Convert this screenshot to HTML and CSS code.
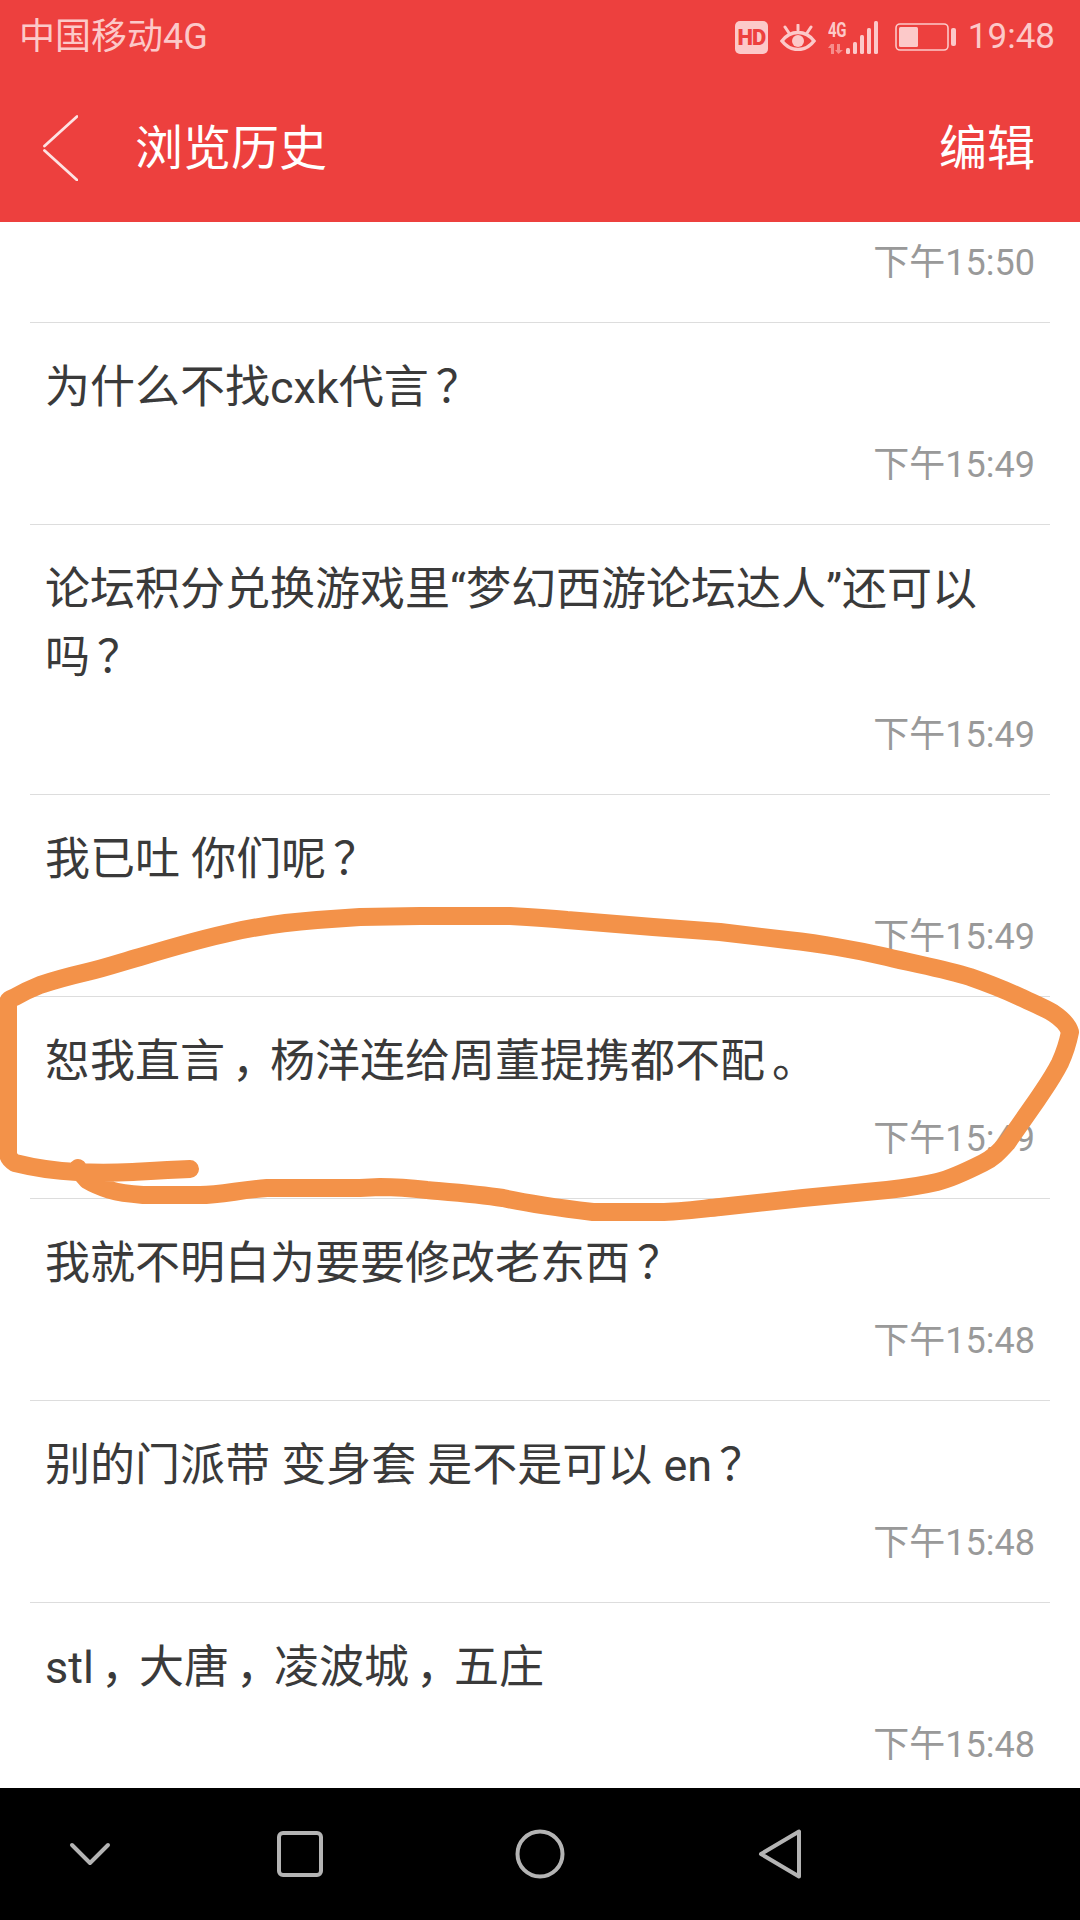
FILE: index.html
```html
<!DOCTYPE html>
<html lang="zh-CN">
<head>
<meta charset="utf-8">
<title>浏览历史</title>
<link rel="stylesheet" href="styles.css">
</head>
<body>
<div class="screen">
  <header class="top">
    <div class="status">
      <span class="carrier">中国移动4G</span>
      <div class="status-icons">
        <span class="hd">HD</span>
        <svg class="eye" width="36" height="27" viewBox="0 0 36 27" fill="none" stroke="#fcc9c9">
          <path d="M2 17C6.500 11 11.500 8.500 18 8.500S29.500 11 34 17C29.500 23 24.500 25.500 18 25.500S6.500 23 2 17Z" stroke-width="3.400"/>
          <circle cx="18" cy="17" r="6" fill="#fcc9c9" stroke="none"/>
          <path d="M18 1v5M5 3l4 6M31 3l-4 6" stroke-width="3" stroke-linecap="round"/>
        </svg>
        <div class="net">
          <div class="net-type">
            <span class="g4">4G</span>
            <svg width="16" height="10" viewBox="0 0 16 10"><path d="M3 0h3v10H3zM0 4l3-4v4zM9 0h3v6h3l-4.500 4L7 6h2z" fill="#f68d8b"/></svg>
          </div>
          <svg class="bars" width="33" height="33" viewBox="0 0 33 33" fill="#fcc9c9">
            <rect x="0" y="27" width="4" height="6" rx="1.500"/>
            <rect x="7" y="21" width="4" height="12" rx="1.500"/>
            <rect x="14" y="14" width="4" height="19" rx="1.500"/>
            <rect x="21" y="7" width="4" height="26" rx="1.500"/>
            <rect x="28" y="0" width="4" height="33" rx="1.500"/>
          </svg>
        </div>
        <svg class="battery" width="61" height="28" viewBox="0 0 61 28">
          <rect x="1" y="1" width="52" height="26" rx="4" fill="none" stroke="#fcc9c9" stroke-width="1.600"/>
          <rect x="4" y="4" width="19" height="20" rx="1.500" fill="#fcc9c9"/>
          <rect x="56" y="5" width="5" height="18" rx="2" fill="#fcc9c9"/>
        </svg>
        <span class="clock">19:48</span>
      </div>
    </div>
    <div class="appbar">
      <svg class="back" width="36" height="66" viewBox="0 0 36 66" fill="none" stroke="#fde3e3" stroke-width="2.800" stroke-linecap="round">
        <path d="M35 1.500 2.500 31M2.500 35.500 35 65"/>
      </svg>
      <h1 class="page-title">浏览历史</h1>
      <span class="edit">编辑</span>
    </div>
  </header>

  <main class="list">
    <div class="row row-cut"><div class="time">下午15:50</div></div>
    <div class="row"><div class="title">为什么不找cxk代言<span class="p">？</span></div><div class="time">下午15:49</div></div>
    <div class="row"><div class="title">论坛积分兑换游戏里“梦幻西游论坛达人”还可以吗<span class="p">？</span></div><div class="time">下午15:49</div></div>
    <div class="row"><div class="title">我已吐 你们呢<span class="p">？</span></div><div class="time">下午15:49</div></div>
    <div class="row"><div class="title">恕我直言<span class="p">，</span>杨洋连给周董提携都不配<span class="p">。</span></div><div class="time">下午15:49</div></div>
    <div class="row"><div class="title">我就不明白为要要修改老东西<span class="p">？</span></div><div class="time">下午15:48</div></div>
    <div class="row"><div class="title">别的门派带 变身套 是不是可以 en<span class="p">？</span></div><div class="time">下午15:48</div></div>
    <div class="row"><div class="title">stl<span class="p">，</span>大唐<span class="p">，</span>凌波城<span class="p">，</span>五庄</div><div class="time">下午15:48</div></div>
  </main>

  <nav class="navbar">
    <svg class="nav-icon" width="44" height="24" viewBox="0 0 44 24" fill="none" stroke="#b4b4b4" stroke-width="4" stroke-linecap="round" stroke-linejoin="round">
      <path d="M4 3l18 18L40 3"/>
    </svg>
    <svg class="nav-icon" width="46" height="46" viewBox="0 0 46 46" fill="none" stroke="#b4b4b4" stroke-width="4">
      <rect x="2" y="2" width="42" height="42" rx="4"/>
    </svg>
    <svg class="nav-icon" width="50" height="50" viewBox="0 0 50 50" fill="none" stroke="#b4b4b4" stroke-width="4">
      <circle cx="25" cy="25" r="22.500"/>
    </svg>
    <svg class="nav-icon" width="44" height="50" viewBox="0 0 44 50" fill="none" stroke="#b4b4b4" stroke-width="4" stroke-linejoin="round">
      <path d="M3 25 41 2.500v45Z"/>
    </svg>
  </nav>

  <svg class="scribble" width="1080" height="1920" viewBox="0 0 1080 1920" fill="none" stroke="#f39249" stroke-width="18" stroke-linecap="round" stroke-linejoin="round">
    <path d="M190 1169C165 1170 150 1171 133 1172C110 1173 95 1173 77 1172C55 1171 35 1168 15 1163C10 1160 8 1157 8 1153L8 1003C8 1000 10 999 15 997C22 993 30 989 40 985C55 980 70 976 87 972C105 968 122 962 140 957C170 948 200 939 233 932C260 926 290 922 317 920L360 917L420 916L510 916C530 917 548 918 567 920L653 927L720 932L787 940C805 942 820 944 837 947C855 950 870 953 887 957C915 964 945 969 970 977C990 984 1005 990 1020 997C1035 1004 1045 1008 1053 1013C1062 1019 1068 1025 1070 1032C1068 1042 1065 1052 1060 1063C1053 1077 1045 1088 1037 1100L1007 1143C998 1153 993 1158 983 1163C965 1172 950 1179 937 1182C920 1186 905 1188 887 1190L803 1198L720 1207C700 1209 680 1212 660 1212L593 1212C560 1208 530 1204 503 1198C478 1194 450 1192 427 1190C410 1188 395 1187 380 1187L360 1188L267 1188C240 1190 220 1195 200 1195L143 1195C130 1194 120 1193 110 1190C98 1186 92 1183 87 1180C83 1176 80 1172 78 1168"/>
  </svg>
</div>
</body>
</html>
```

FILE: styles.css
```css
* {
  box-sizing: border-box;
}

html,
body {
  margin: 0;
  padding: 0;
}

body {
  width: 1080px;
  height: 1920px;
  overflow: hidden;
  background: #fff;
  font-family: Roboto, "Noto Sans CJK SC", sans-serif;
}

.screen {
  position: relative;
  width: 1080px;
  height: 1920px;
  display: flex;
  flex-direction: column;
  overflow: hidden;
}

.top {
  flex: none;
  height: 222px;
  background: #ed403e;
  display: flex;
  flex-direction: column;
}

.status {
  flex: none;
  height: 74px;
  display: flex;
  align-items: center;
  justify-content: space-between;
  padding: 0 25px 0 19px;
  color: #fcc9c9;
}

.carrier {
  font-size: 36px;
  line-height: 40px;
}

.status-icons {
  display: flex;
  align-items: center;
}

.hd {
  width: 33px;
  height: 33px;
  margin-right: 12px;
  border-radius: 5px;
  background: #fcc9c9;
  color: #ed403e;
  font-size: 22px;
  font-weight: 900;
  line-height: 33px;
  letter-spacing: -1px;
  text-align: center;
}

.eye {
  margin-right: 12px;
}

.net {
  display: flex;
  align-items: flex-end;
  margin-right: 16px;
}

.net-type {
  width: 18px;
  display: flex;
  flex-direction: column;
  align-items: flex-start;
  gap: 5px;
}

.g4 {
  display: block;
  font-size: 20px;
  font-weight: 700;
  line-height: 18px;
  letter-spacing: -0.5px;
  white-space: nowrap;
  transform: scaleX(0.75);
  transform-origin: left center;
}

.battery {
  margin-right: 12px;
}

.clock {
  font-size: 35px;
  line-height: 40px;
}

.appbar {
  flex: 1;
  display: flex;
  align-items: center;
  padding: 2px 45px 0 42px;
  color: #fff;
}

.back {
  flex: none;
  margin-top: -2px;
  margin-right: 57px;
}

.page-title {
  flex: 1;
  margin: 0;
  font-size: 48px;
  font-weight: 400;
  line-height: 60px;
}

.edit {
  font-size: 48px;
  line-height: 60px;
}

.list {
  flex: 1;
  min-height: 0;
  overflow: hidden;
}

.row {
  margin: 0 30px;
  padding: 31px 15px 0 15px;
  height: 202px;
  border-top: 1px solid #ddd;
}

.row:has(.title + .time) {
  height: auto;
  min-height: 202px;
  padding-bottom: 39px;
}

.row-cut {
  height: 100px;
  padding-top: 21px;
  border-top: 0;
}

.title {
  padding-right: 40px;
  color: #3a3a3a;
  font-size: 45px;
  line-height: 68px;
}

.p {
  padding-left: 7px;
  letter-spacing: -7px;
}

.time {
  margin-top: 23px;
  color: #999;
  font-size: 36px;
  line-height: 40px;
  text-align: right;
}

.row-cut .time {
  margin-top: 0;
}

.navbar {
  flex: none;
  height: 132px;
  background: #000;
  display: grid;
  grid-template-columns: 180px 240px 240px 240px;
  justify-items: center;
  align-items: center;
}

.scribble {
  position: absolute;
  left: 0;
  top: 0;
  pointer-events: none;
}
```
